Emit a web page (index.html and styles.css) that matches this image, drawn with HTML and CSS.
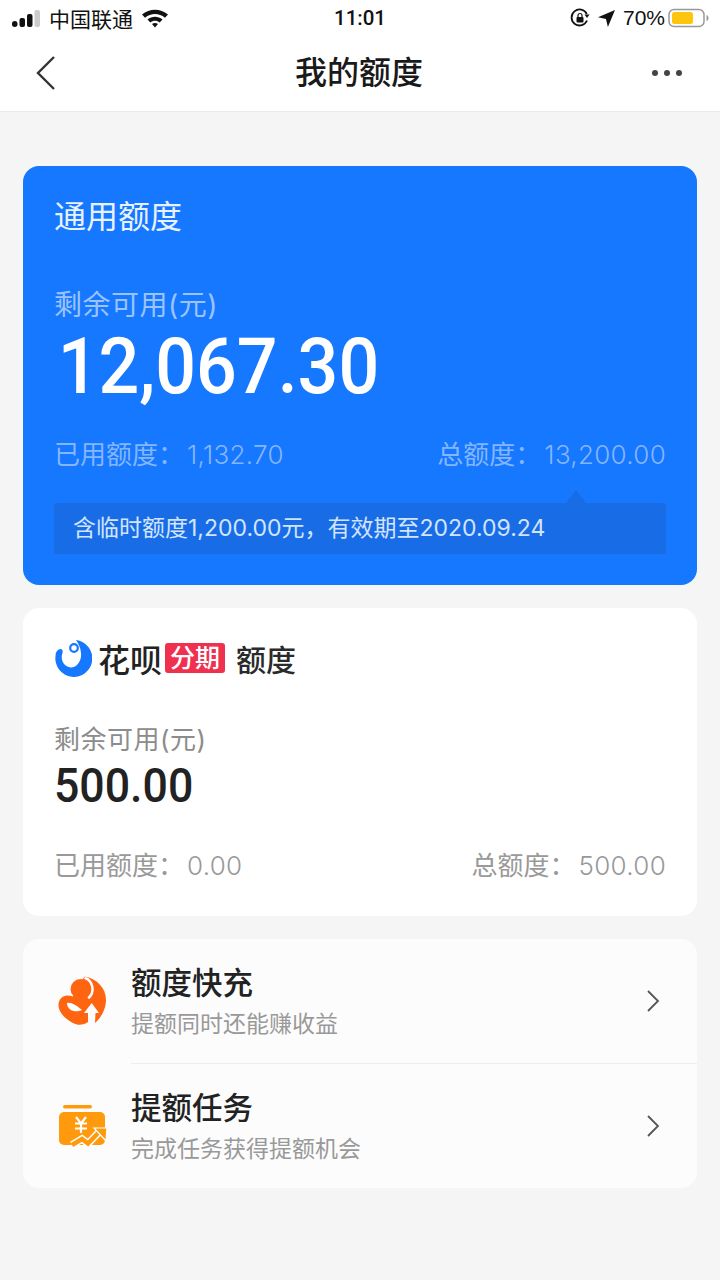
FILE: index.html
```html
<!DOCTYPE html>
<html lang="zh-CN">
<head>
    <meta charset="UTF-8">
    <meta name="viewport" content="width=device-width, initial-scale=1.0">
    <title>我的额度</title>
    <link rel="stylesheet" href="styles.css">
</head>
<body>
    <header class="top">
        <div class="status">
            <div class="status-left">
                <svg class="signal" width="28" height="19" viewBox="0 0 28 19">
                    <rect x="0" y="12" width="5.500" height="6" rx="2.700" fill="#111"/>
                    <rect x="7.500" y="9" width="5.500" height="9" rx="2" fill="#111"/>
                    <rect x="15" y="5" width="5.500" height="13" rx="2" fill="#111"/>
                    <rect x="22.500" y="1" width="5.500" height="17" rx="2" fill="#ccc"/>
                </svg>
                <span class="carrier">中国联通</span>
                <svg class="wifi" width="28" height="20" viewBox="0 0 28 20">
                    <path d="M1 6.500C8.500 0 19.500 0 27 6.500L24 9.800C18 4.800 10 4.800 4 9.800Z" fill="#111"/>
                    <path d="M6.500 11.500C11 7.800 17 7.800 21.500 11.500L18.700 14.500C16 12.300 12 12.300 9.300 14.500Z" fill="#111"/>
                    <path d="M11 16C13 14.600 15 14.600 17 16L14 19.500Z" fill="#111"/>
                </svg>
            </div>
            <span class="clock">11:01</span>
            <div class="status-right">
                <svg width="20" height="20" viewBox="0 0 20 20">
                    <path d="M17 12.500A8 8 0 1 1 16.800 6" fill="none" stroke="#111" stroke-width="1.800"/>
                    <path d="M14.500 6.500L19.500 6.500L17 10Z" fill="#111"/>
                    <rect x="6.500" y="9" width="7" height="5.500" rx="1" fill="#111"/>
                    <path d="M8 9V7.500a2 2 0 0 1 4 0V9" fill="none" stroke="#111" stroke-width="1.200"/>
                </svg>
                <svg class="loc" width="17" height="17" viewBox="0 0 16 16">
                    <path d="M16 0L0 6.800L7.500 8.500L9.300 16Z" fill="#111"/>
                </svg>
                <span class="percent">70%</span>
                <svg width="42" height="20" viewBox="0 0 42 20">
                    <rect x="1" y="1.500" width="35" height="17" rx="5" fill="none" stroke="#999" stroke-width="1.500"/>
                    <rect x="4" y="4" width="21" height="12" rx="2.500" fill="#fcc60e"/>
                    <path d="M38.500 7C40 7.500 40.500 8.500 40.500 10S40 12.500 38.500 13Z" fill="#999"/>
                </svg>
            </div>
        </div>
        <nav class="nav">
            <svg class="back" width="24" height="36" viewBox="0 0 24 36">
                <path d="M20 2L4 18L20 34" fill="none" stroke="#333" stroke-width="2.400"/>
            </svg>
            <h1>我的额度</h1>
            <div class="dots"><i></i><i></i><i></i></div>
        </nav>
    </header>

    <main class="content">
        <section class="card card-blue">
            <h2 class="card-title">通用额度</h2>
            <p class="label">剩余可用(元)</p>
            <p class="big-num">12,067.30</p>
            <div class="totals">
                <span>已用额度：<em>1,132.70</em></span>
                <span>总额度：<em>13,200.00</em></span>
            </div>
            <div class="tip">含临时额度1,200.00元，有效期至2020.09.24</div>
        </section>

        <section class="card card-white">
            <div class="brand">
                <svg width="38" height="38" viewBox="0 0 38 38">
                    <path d="M22 1A18.500 18.500 0 1 1 1.500 17C1.500 13 3 11 6 10C8.500 9.500 9 12 8.500 14C7 18 7.500 22 11 26C15 29.500 20 29 23 26C26 23 27.500 19 27 14C26.500 8 24 4 22 1Z" fill="#1677ff"/>
                    <circle cx="20" cy="9" r="3.800" fill="#fff" stroke="#1677ff" stroke-width="2.200"/>
                </svg>
                <span class="brand-name">花呗</span>
                <span class="brand-tag">分期</span>
                <span class="brand-suffix">额度</span>
            </div>
            <p class="label label-gray">剩余可用(元)</p>
            <p class="mid-num">500.00</p>
            <div class="totals totals-gray">
                <span>已用额度：<em>0.00</em></span>
                <span>总额度：<em>500.00</em></span>
            </div>
        </section>

        <section class="card card-list">
            <a class="row">
                <svg class="row-icon" width="50" height="50" viewBox="0 0 50 50">
                    <path d="M27 .5C39 3 48 12 48 24C48 33 43 42 37 47L37.500 37H41L33.700 27L26 37H30V46C26 49 20 50 15 47C9 44 0 37 .5 28C1 23 5 19.500 9 19.500C11 19.500 13 20 15 20.500L23 5Z" fill="#ff6410"/>
                    <circle cx="22.500" cy="13" r="10" fill="#ff6410"/>
                    <path d="M26.600 1.700A12 12 0 0 1 30.200 22.200" fill="none" stroke="#fff" stroke-width="2.500"/>
                    <path d="M9 27C13 26 18 29 24 34C18 37 9 35 9 27Z" fill="#fff"/>
                </svg>
                <div class="row-text">
                    <strong>额度快充</strong>
                    <span>提额同时还能赚收益</span>
                </div>
                <svg class="chevron" width="14" height="24" viewBox="0 0 14 24">
                    <path d="M2 2L12 12L2 22" fill="none" stroke="#555" stroke-width="1.800"/>
                </svg>
            </a>
            <a class="row row-second">
                <svg class="row-icon" width="50" height="44" viewBox="0 0 50 44">
                    <rect x="5" y="1" width="29" height="3.500" rx="1.700" fill="#ff9a0d"/>
                    <rect x="1" y="8" width="46" height="33" rx="5" fill="#ff9a0d"/>
                    <path d="M18 13L23 19.500L28 13M17 19.500H29M17 24.500H29M23 19.500V29" fill="none" stroke="#fff" stroke-width="2.200"/>
                    <path d="M14 41L24 35L30 39.500L43 26" fill="none" stroke="#fff" stroke-width="7.500"/>
                    <path d="M14 41L24 35L30 39.500L43 26" fill="none" stroke="#ff9a0d" stroke-width="4.500"/>
                    <path d="M36 24H49L48 37Z" fill="#ff9a0d" stroke="#fff" stroke-width="1.200"/>
                </svg>
                <div class="row-text">
                    <strong>提额任务</strong>
                    <span>完成任务获得提额机会</span>
                </div>
                <svg class="chevron" width="14" height="24" viewBox="0 0 14 24">
                    <path d="M2 2L12 12L2 22" fill="none" stroke="#555" stroke-width="1.800"/>
                </svg>
            </a>
        </section>
    </main>
</body>
</html>
```

FILE: styles.css
```css
* {
    box-sizing: border-box;
}

body {
    font-family: Inter, "Noto Sans CJK SC", sans-serif;
    background-color: #f5f5f5;
    color: #222;
    margin: 0;
    width: 720px;
    min-height: 1280px;
}

p, h1, h2 {
    margin: 0;
    font-weight: 400;
}

em {
    font-style: normal;
    font-weight: 300;
    margin-left: 3px;
    letter-spacing: 0.3px;
}

.top {
    background-color: #fff;
    border-bottom: 1px solid #ebebeb;
    height: 112px;
}

.status {
    height: 36px;
    display: grid;
    grid-template-columns: 1fr auto 1fr;
    align-items: center;
    padding: 0 10px 0 12px;
    font-size: 21px;
    color: #111;
}

.status-left {
    display: flex;
    align-items: center;
    gap: 9px;
}

.wifi {
    margin-left: -1px;
}

.clock {
    font-family: Roboto, sans-serif;
    font-size: 20.500px;
    font-weight: 500;
    margin-left: -2px;
}

.status-right {
    display: flex;
    align-items: center;
    justify-content: flex-end;
    gap: 8px;
}

.percent {
    font-family: "Liberation Sans", sans-serif;
    font-size: 21px;
    margin-right: -5px;
}

.nav {
    height: 74px;
    display: grid;
    grid-template-columns: 1fr auto 1fr;
    align-items: center;
    padding: 0 38px 0 36px;
}

.back {
    margin-left: -2px;
}

.nav h1 {
    font-size: 32px;
    font-weight: 500;
    line-height: 40px;
    color: #1a1a1a;
    margin-top: -1px;
}

.dots {
    display: flex;
    gap: 6px;
    justify-self: end;
}

.dots i {
    width: 6px;
    height: 6px;
    border-radius: 50%;
    background-color: #444;
}

.content {
    padding: 54px 23px 0;
    display: flex;
    flex-direction: column;
    gap: 23px;
}

.card {
    border-radius: 16px;
    background-color: #fff;
}

.card-blue {
    background-color: #1677ff;
    height: 419px;
    padding: 29px 31px 0;
    color: #fff;
}

.card-title {
    font-size: 32px;
    line-height: 44px;
    color: #e8f1ff;
}

.label {
    font-size: 28px;
    line-height: 36px;
    margin-top: 48px;
    letter-spacing: 0.5px;
    color: #9ac3ff;
}

.big-num {
    font-family: Roboto, "Liberation Sans", sans-serif;
    font-size: 78px;
    font-weight: 500;
    line-height: 86px;
    margin-top: 1px;
    transform: scaleX(0.92);
    transform-origin: left;
    padding-left: 4px;
}

.totals {
    display: flex;
    justify-content: space-between;
    font-size: 26px;
    line-height: 36px;
    color: #84b6ff;
    margin-top: 27px;
}

.tip {
    position: relative;
    height: 51px;
    margin-top: 30px;
    background-color: #186de6;
    border-radius: 3px;
    padding-left: 19px;
    font-size: 23px;
    line-height: 51px;
    color: #d3e4ff;
}

.tip::before {
    content: "";
    position: absolute;
    right: 80px;
    top: -13px;
    border-left: 10px solid transparent;
    border-right: 10px solid transparent;
    border-bottom: 13px solid #186de6;
}

.card-white {
    height: 308px;
    padding: 29px 31px 0;
}

.brand {
    display: flex;
    align-items: center;
    height: 42px;
}

.brand-name {
    font-size: 32px;
    font-weight: 500;
    margin-left: 6px;
    color: #222;
}

.brand-tag {
    background-color: #f0304f;
    color: #fff;
    font-size: 25px;
    font-weight: 500;
    line-height: 30px;
    height: 30px;
    padding: 0 5px;
    border-radius: 3px;
    margin-left: 3px;
}

.brand-suffix {
    font-size: 30px;
    font-weight: 500;
    margin-left: 11px;
    color: #2a2a2a;
}

.label-gray {
    font-size: 26px;
    color: #8c8c8c;
    margin-top: 43px;
}

.mid-num {
    font-family: Roboto, "Liberation Sans", sans-serif;
    font-size: 48px;
    font-weight: 500;
    line-height: 56px;
    color: #222;
    transform: scaleX(0.93);
    transform-origin: left;
}

.totals-gray {
    color: #999;
    margin-top: 34px;
}

.card-list {
    height: 249px;
    background-color: #fcfcfc;
    display: flex;
    flex-direction: column;
}

.row {
    position: relative;
    height: 124px;
    display: flex;
    align-items: center;
    padding: 0 37px 0 35px;
}

.row-second {
    padding-top: 2px;
}

.row-second::before {
    content: "";
    position: absolute;
    left: 108px;
    right: 0;
    top: 0;
    border-top: 1px solid #efefef;
}

.row-icon {
    flex: none;
    width: 50px;
}

.row-text {
    flex: 1;
    display: flex;
    flex-direction: column;
    gap: 4px;
    margin-left: 23px;
}

.row-text strong {
    font-size: 30.500px;
    font-weight: 500;
    line-height: 42px;
    color: #222;
}

.row-text span {
    font-size: 23px;
    line-height: 32px;
    color: #999;
}
```
